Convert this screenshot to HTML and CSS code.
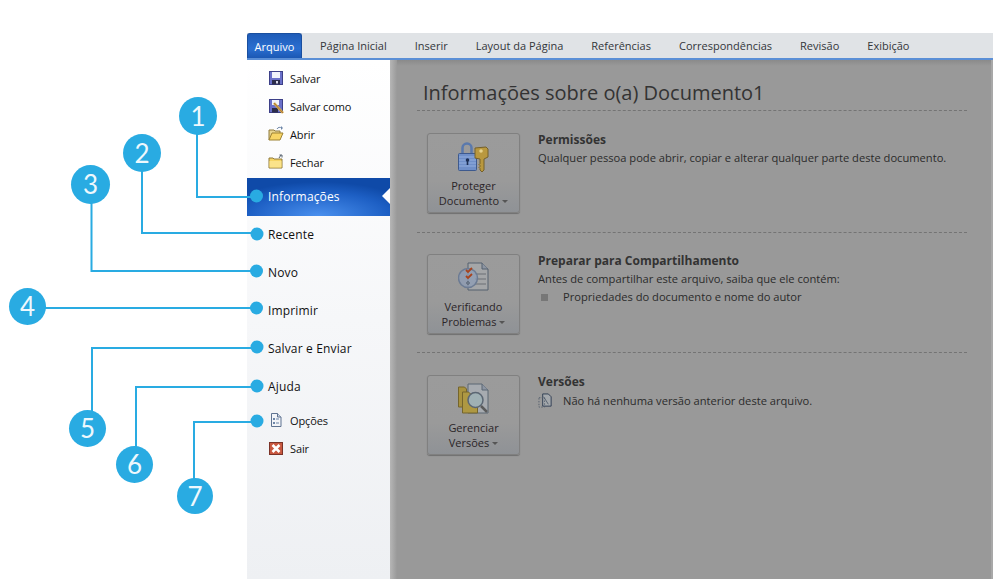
FILE: index.html
```html
<!DOCTYPE html>
<html lang="pt">
<head>
<meta charset="utf-8">
<title>Informações</title>
<link rel="stylesheet" href="styles.css">
</head>
<body>
<div class="page">
  <div class="app">
    <nav class="tabs">
      <span class="tab tab-file">Arquivo</span>
      <div class="tab-list">
        <span class="tab">Página Inicial</span>
        <span class="tab">Inserir</span>
        <span class="tab">Layout da Página</span>
        <span class="tab">Referências</span>
        <span class="tab">Correspondências</span>
        <span class="tab">Revisão</span>
        <span class="tab">Exibição</span>
      </div>
    </nav>
    <div class="body">
      <aside class="side">
        <div class="item"><svg class="ico" viewBox="0 0 16 16"><rect x="1.500" y="1.500" width="13" height="13" fill="#6a70c9" stroke="#3d4088"/><rect x="4" y="2" width="8" height="6" fill="#f0f2fb"/><rect x="4" y="10" width="8" height="4.500" fill="#2c2c4a"/><rect x="8" y="11" width="2" height="2.500" fill="#d8d8e8"/></svg><span>Salvar</span></div>
        <div class="item"><svg class="ico" viewBox="0 0 16 16"><rect x="1.500" y="1.500" width="13" height="13" fill="#6a70c9" stroke="#3d4088"/><rect x="4" y="2" width="7" height="5" fill="#f0f2fb"/><rect x="4" y="10" width="6" height="4.500" fill="#2c2c4a"/><path d="M6 5l9 10" stroke="#d8b04a" stroke-width="2.600"/><path d="M6 5l9 10" stroke="#a0603a" stroke-width=".8"/></svg><span>Salvar como</span></div>
        <div class="item"><svg class="ico" viewBox="0 0 16 16"><path d="M1 14V4h5l1 1h5v2" fill="#e8d590" stroke="#8f7a3c"/><path d="M1 14l3-7h11l-3 7z" fill="#f7d566" stroke="#9c8133"/><path d="M9 3c1-2 3-2 5-1" fill="none" stroke="#6d86a8"/><path d="M13 0l2 2-2 2z" fill="#6d86a8"/></svg><span>Abrir</span></div>
        <div class="item"><svg class="ico" viewBox="0 0 16 16"><path d="M1 14V4h4l1 1h8v9z" fill="#f6d565" stroke="#8f7a3c"/><path d="M1.500 7h12v6.500h-12z" fill="#fbe38a"/><path d="M11 4l2-3" stroke="#55606e"/><path d="M11.500 1h2.500v2.500" fill="none" stroke="#55606e"/></svg><span>Fechar</span></div>
        <div class="item-lg item-active"><span>Informações</span><i class="notch"></i></div>
        <div class="item-lg"><span>Recente</span></div>
        <div class="item-lg"><span>Novo</span></div>
        <div class="item-lg"><span>Imprimir</span></div>
        <div class="item-lg"><span>Salvar e Enviar</span></div>
        <div class="item-lg"><span>Ajuda</span></div>
        <div class="item"><svg class="ico" viewBox="0 0 16 16"><path d="M3.500 1.500h6l3.500 3.500v9.500h-9.500z" fill="#f2f4f8" stroke="#5f7391"/><path d="M9.500 1.500V5H13" fill="#cfd8e6" stroke="#5f7391"/><rect x="5" y="6" width="2" height="2" fill="#6d86a8"/><rect x="5" y="10" width="2" height="2" fill="#6d86a8"/><path d="M8 7h3M8 11h3" stroke="#6d86a8"/></svg><span>Opções</span></div>
        <div class="item"><svg class="ico" viewBox="0 0 16 16"><rect x="1.500" y="2.500" width="13" height="12" fill="#c8573f" stroke="#7b3328"/><path d="M4.500 5l7 7M11.500 5l-7 7" stroke="#fff" stroke-width="2.600"/></svg><span>Sair</span></div>
      </aside>
      <main class="main">
        <h1 class="title">Informações sobre o(a) Documento1</h1>
        <section class="sec sec-a">
          <div class="btn">
            <svg class="btn-ico" viewBox="0 0 32 32"><path d="M4.500 14V8a4.500 4.500 0 0 1 9 0v6" fill="none" stroke="#5a79ad" stroke-width="2.500"/><rect x=".5" y="13.500" width="18" height="17" rx="1" fill="#6f8fc9" stroke="#3e5a8e"/><path d="M1 17h17M1 20h17M1 23h17M1 26h17" stroke="#93aede"/><circle cx="9.500" cy="20" r="1.800" fill="#1c2f55"/><rect x="8.700" y="20" width="1.600" height="5" fill="#1c2f55"/><path d="M17 8l11-1 2 2v8l-4 2v11l-2 2-2-2v-1.500l-1-1 1-1v-1l-1-1 1-1V19l-5-1z" fill="#b9983e" stroke="#75602a"/><circle cx="23" cy="11" r="1.800" fill="#e6d18a"/></svg>
            <span class="btn-text">Proteger<br>Documento<i class="caret"></i></span>
          </div>
          <div class="info">
            <h2>Permissões</h2>
            <p>Qualquer pessoa pode abrir, copiar e alterar qualquer parte deste documento.</p>
          </div>
        </section>
        <section class="sec sec-b">
          <div class="btn">
            <svg class="btn-ico" viewBox="0 0 32 32"><path d="M10 2h14l6 6v21H10z" fill="#a4a6a8" stroke="#55606e"/><path d="M24 2v6h6" fill="#8d95a2" stroke="#55606e"/><path d="M17 13h11M17 18h11M17 23h11" stroke="#6b6f74"/><circle cx="10" cy="17" r="9.500" fill="#8d9cb6" fill-opacity=".75" stroke="#6c7b93" stroke-width="1.500"/><path d="M8 9l2 2 4-4M8 15l2 2 4-4" fill="none" stroke="#a8431d" stroke-width="1.800"/><circle cx="10" cy="22" r="1.300" fill="none" stroke="#55606e"/></svg>
            <span class="btn-text">Verificando<br>Problemas<i class="caret"></i></span>
          </div>
          <div class="info">
            <h2>Preparar para Compartilhamento</h2>
            <p>Antes de compartilhar este arquivo, saiba que ele contém:</p>
            <p class="li"><i class="sq"></i>Propriedades do documento e nome do autor</p>
          </div>
        </section>
        <section class="sec sec-c">
          <div class="btn">
            <svg class="btn-ico" viewBox="0 0 32 32"><path d="M10 2h14l6 6v23H10z" fill="#a7abb0" stroke="#5b6673"/><path d="M24 2v6h6" fill="#8d95a2" stroke="#5b6673"/><path d="M.5 5h6l2 2v18h-8z" fill="#a8923e" stroke="#75652c"/><path d="M4.500 10h6l2 2h7v19H4.500z" fill="#ae9842" stroke="#75652c"/><circle cx="17.500" cy="18" r="7.500" fill="#9fb0b4" stroke="#5b6673" stroke-width="1.500"/><path d="M23 24l6 6" stroke="#5b5b5b" stroke-width="2.500"/></svg>
            <span class="btn-text">Gerenciar<br>Versões<i class="caret"></i></span>
          </div>
          <div class="info">
            <h2>Versões</h2>
            <p class="li li-ver"><svg class="ver-ico" viewBox="0 0 16 16"><path d="M5 1h6l3 3v10H5z" fill="#a4a8ac" stroke="#2f3d52"/><path d="M1 5h6v10H1z" fill="none" stroke="#55606e" stroke-dasharray="1.500 1.500"/><path d="M6 4l5 8" stroke="#55606e"/></svg>Não há nenhuma versão anterior deste arquivo.</p>
          </div>
        </section>
      </main>
    </div>
  </div>

  <svg class="callouts" viewBox="0 0 993 580" width="993" height="580">
    <g class="leader">
      <path d="M197 130V197H257"/>
      <path d="M142 165V233H257"/>
      <path d="M91.500 200V271H257"/>
      <path d="M40 308H257"/>
      <path d="M92 415V348H257"/>
      <path d="M136 450V387H257"/>
      <path d="M194 482V422H257"/>
    </g>
    <g class="dots">
      <circle cx="256.500" cy="196" r="6.500"/>
      <circle cx="257" cy="234" r="6.500"/>
      <circle cx="256.500" cy="271" r="6.500"/>
      <circle cx="256.500" cy="308" r="6.500"/>
      <circle cx="257" cy="347" r="6.500"/>
      <circle cx="257" cy="386" r="6.500"/>
      <circle cx="257" cy="421" r="6.500"/>
    </g>
    <g class="badges">
      <circle cx="198" cy="116" r="19"/>
      <circle cx="142" cy="153" r="19"/>
      <circle cx="90.500" cy="184.500" r="19.500"/>
      <circle cx="27.500" cy="306.500" r="18.500"/>
      <circle cx="87.500" cy="428.500" r="18.500"/>
      <circle cx="134.500" cy="464.500" r="18.500"/>
      <circle cx="195" cy="496" r="18"/>
    </g>
    <g class="nums">
      <text x="198" y="125.500">1</text>
      <text x="142" y="162.500">2</text>
      <text x="90.500" y="194">3</text>
      <text x="27.500" y="316">4</text>
      <text x="87.500" y="438">5</text>
      <text x="134.500" y="474">6</text>
      <text x="195" y="505.500">7</text>
    </g>
  </svg>
</div>
</body>
</html>
```

FILE: styles.css
```css
* { box-sizing: border-box; }
html, body { margin: 0; padding: 0; background: #fff; }
.page {
  position: relative;
  width: 993px;
  height: 580px;
  padding: 33px 0 0 247px;
  overflow: hidden;
  font-family: "Open Sans", "Noto Sans", sans-serif;
}
.app { display: flex; flex-direction: column; width: 746px; height: 546px; }

.tabs {
  display: flex;
  align-items: flex-end;
  height: 27px;
  flex: none;
  background: #e0e3e6;
  border-bottom: 2px solid #5b8fd6;
  font-size: 11px;
  color: #33363a;
}
.tab-list { display: flex; margin-left: 4px; }
.tab { display: block; height: 25px; line-height: 25px; padding: 0 14px; white-space: nowrap; }
.tab-file {
  width: 55px;
  height: 25px;
  padding: 0;
  text-align: center;
  color: #fff;
  background: linear-gradient(#1f5cb8, #2a6ed0 60%, #1b58b4);
  border: 1px solid #1a4f9f;
  border-bottom: 0;
  border-radius: 3px 3px 0 0;
}

.body { display: flex; flex: 1; min-height: 0; }
.side {
  width: 143px;
  flex: none;
  padding-top: 4px;
  background: linear-gradient(#ffffff, #f6f7f9 50%, #eef0f3);
  font-size: 11px;
  letter-spacing: -.12px;
  color: #111;
}
.item { display: flex; align-items: center; gap: 6px; height: 28px; padding-left: 21px; }
.ico { width: 16px; height: 16px; flex: none; }
.item-lg {
  position: relative;
  display: flex;
  align-items: center;
  height: 38px;
  padding: 0 0 2px 21px;
  font-size: 12px;
  letter-spacing: .15px;
}
.item-active {
  margin-top: 2px;
  color: #fff;
  background: radial-gradient(ellipse 70% 90% at 50% 100%, #4a90ee, #1d5fc4 70%, #0f4aa8);
}
.notch {
  position: absolute;
  right: 0;
  top: 50%;
  margin-top: -9px;
  border-style: solid;
  border-width: 8px 8px 8px 0;
  border-color: transparent #fff transparent transparent;
}

.main {
  flex: 1;
  min-width: 0;
  padding: 16px 26px 0 27px;
  background-color: #999;
  background-image: linear-gradient(90deg, #b6b6b6, #999 7px), linear-gradient(#8a8a8a, #999 6px);
  background-size: 7px 100%, 100% 6px;
  background-repeat: no-repeat;
  color: #2b2b2b;
  font-size: 11.15px;
  box-shadow: inset -2px 0 0 #a8a8a8;
}
.title {
  margin: 0 0 0 6px;
  height: 34px;
  font-size: 20px;
  line-height: 34px;
  font-weight: 400;
  color: #333;
  white-space: nowrap;
}
.sec { display: flex; align-items: flex-start; gap: 18px; padding-left: 10px; border-top: 1px dashed #747474; }
.sec-a { padding-top: 22px; padding-bottom: 19px; }
.sec-b { padding-top: 21px; padding-bottom: 18px; }
.sec-c { padding-top: 22px; }

.btn {
  display: flex;
  flex-direction: column;
  align-items: center;
  width: 93px;
  height: 80px;
  padding-top: 6px;
  flex: none;
  border: 1px solid #808080;
  border-radius: 3px;
  background: linear-gradient(#9b9b9b, #9a9a9a 60%, #8f9296);
  box-shadow: 0 1px 1px #6f6f6f;
  font-size: 11px;
}
.btn-ico { width: 32px; height: 32px; flex: none; }
.btn-text { margin-top: 6px; text-align: center; line-height: 15px; color: #2b2528; }
.caret {
  display: inline-block;
  margin-left: 3px;
  vertical-align: 2px;
  border-style: solid;
  border-width: 3px 3px 0;
  border-color: #555 transparent transparent;
}
.info { white-space: nowrap; }
.info h2 { margin: 0 0 3px; font-size: 12px; line-height: 13px; font-weight: 700; color: #333; }
.info p { margin: 0; line-height: 18px; }
.info .li-ver { margin-top: 4px; }
.li { position: relative; padding-left: 25px; display: flex; align-items: center; }
.sq { position: absolute; left: 3px; top: 6px; width: 7px; height: 7px; background: #777; }
.ver-ico { position: absolute; left: 0; top: 1px; width: 15px; height: 15px; }

.callouts { position: absolute; left: 0; top: 0; pointer-events: none; }
.leader path { fill: none; stroke: #29abe2; stroke-width: 2; }
.dots circle, .badges circle { fill: #29abe2; }
.nums text { font-family: Lato, "Open Sans", sans-serif; font-size: 26px; font-weight: 400; fill: #eef8fd; text-anchor: middle; }
```
